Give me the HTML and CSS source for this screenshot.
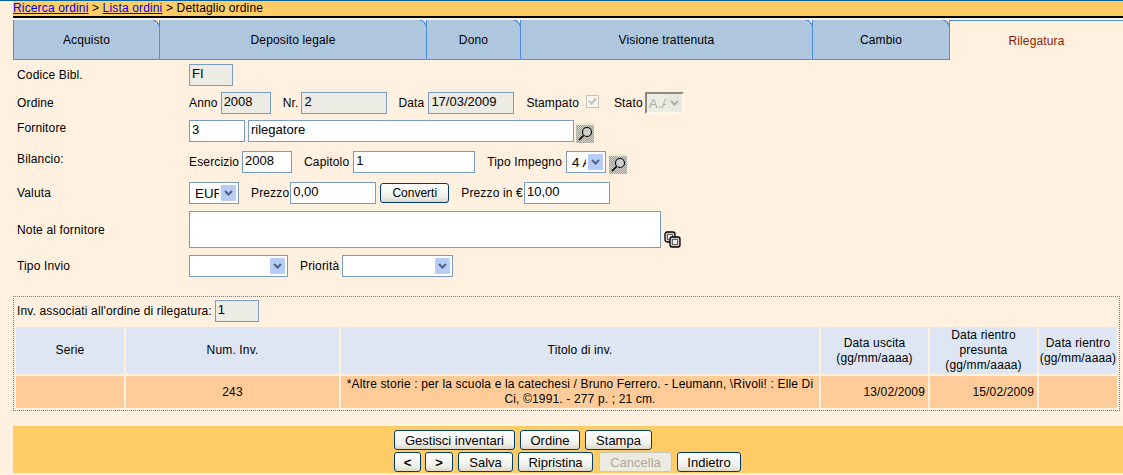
FILE: index.html
```html
<!DOCTYPE html>
<html lang="it">
<head>
    <meta charset="UTF-8">
    <title>Dettaglio ordine</title>
    <link rel="stylesheet" href="styles.css">
</head>
<body>
    <svg class="defs" width="0" height="0">
        <defs>
            <pattern id="dots" width="2" height="2" patternUnits="userSpaceOnUse">
                <rect width="2" height="2" fill="#d4d4cc"/>
                <rect width="1" height="1" fill="#9c9c9c"/>
                <rect x="1" y="1" width="1" height="1" fill="#9c9c9c"/>
            </pattern>
            <symbol id="lens" viewBox="0 0 18 20">
                <rect y="2" width="18" height="18" fill="url(#dots)"/>
                <rect width="18" height="2" fill="#ece8c8"/>
                <circle cx="11" cy="9" r="4.5" fill="#d0d0d0" stroke="#000" stroke-width="1.1"/>
                <path d="M7.5 12.5 L3 17" stroke="#000" stroke-width="1.7"/>
            </symbol>
        </defs>
    </svg>

    <div class="crumbs"><a href="#">Ricerca ordini</a> &gt; <a href="#">Lista ordini</a> &gt; Dettaglio ordine</div>

    <div class="tabs">
        <a class="tab t1">Acquisto</a>
        <a class="tab t2">Deposito legale</a>
        <a class="tab t3">Dono</a>
        <a class="tab t4">Visione trattenuta</a>
        <a class="tab t5">Cambio</a>
        <a class="tab active">Rilegatura</a>
    </div>

    <form class="detail">
        <div class="row r1">
            <label class="lbl">Codice Bibl.</label>
            <input class="off w44" value="FI" disabled>
        </div>
        <div class="row r2">
            <label class="lbl">Ordine</label>
            <span>Anno</span>
            <input class="off w50 ml3" value="2008" disabled>
            <span class="ml12">Nr.</span>
            <input class="off w86 ml3" value="2" disabled>
            <span class="ml11">Data</span>
            <input class="off w86 ml4" value="17/03/2009" disabled>
            <span class="ml12">Stampato</span>
            <input class="check" type="checkbox" checked disabled>
            <span class="ml15">Stato</span>
            <select class="sel-off" disabled><option>A.A.</option></select>
        </div>
        <div class="row r3">
            <label class="lbl">Fornitore</label>
            <input class="w56" value="3">
            <input class="w326 ml3" value="rilegatore">
            <svg class="lens-ico" width="18" height="20"><use href="#lens"/></svg>
        </div>
        <div class="row r4">
            <label class="lbl">Bilancio:</label>
            <span>Esercizio</span>
            <input class="w50 ml3" value="2008">
            <span class="ml12">Capitolo</span>
            <input class="w122 ml4" value="1">
            <span class="ml12">Tipo Impegno</span>
            <select class="w40 ml4"><option>4 A</option></select>
            <svg class="lens-ico" width="18" height="20"><use href="#lens"/></svg>
        </div>
        <div class="row r5">
            <label class="lbl">Valuta</label>
            <select class="w50"><option>EUR</option></select>
            <span class="ml12">Prezzo</span>
            <input class="w86 ml1" value="0,00">
            <button type="button" class="btn convert">Converti</button>
            <span class="ml12">Prezzo in €</span>
            <input class="w86 ml1" value="10,00">
        </div>
        <div class="row r6">
            <label class="lbl">Note al fornitore</label>
            <textarea class="note"></textarea>
            <svg class="copy-ico" width="17" height="17" viewBox="0 0 17 17">
                <rect x="1" y="1" width="10" height="10" rx="2" fill="#c8c8c8" stroke="#000" stroke-width="1.3"/>
                <rect x="3.5" y="3.5" width="5" height="5" fill="#eee" stroke="#666"/>
                <rect x="6" y="6" width="10" height="10" rx="2" fill="#c8c8c8" stroke="#000" stroke-width="1.3"/>
                <rect x="8.5" y="8.5" width="5" height="5" fill="#eee" stroke="#666"/>
            </svg>
        </div>
        <div class="row r7">
            <label class="lbl">Tipo Invio</label>
            <select class="w99"><option></option></select>
            <span class="ml12">Priorità</span>
            <select class="w111 ml3"><option></option></select>
        </div>

        <div class="inv">
            <div class="inv-head">
                <span>Inv. associati all'ordine di rilegatura:</span>
                <input class="off w44 ml3" value="1" disabled>
            </div>
            <table class="inv-table">
                <colgroup>
                    <col class="c1"><col class="c2"><col class="c3"><col class="c4"><col class="c5"><col class="c6">
                </colgroup>
                <tr class="h">
                    <th>Serie</th>
                    <th>Num. Inv.</th>
                    <th>Titolo di inv.</th>
                    <th>Data uscita<br>(gg/mm/aaaa)</th>
                    <th>Data rientro<br>presunta<br>(gg/mm/aaaa)</th>
                    <th>Data rientro<br>(gg/mm/aaaa)</th>
                </tr>
                <tr class="d">
                    <td></td>
                    <td>243</td>
                    <td>*Altre storie : per la scuola e la catechesi / Bruno Ferrero. - Leumann, \Rivoli! : Elle Di Ci, ©1991. - 277 p. ; 21 cm.</td>
                    <td class="dt">13/02/2009</td>
                    <td class="dt">15/02/2009</td>
                    <td></td>
                </tr>
            </table>
        </div>
    </form>

    <div class="actions">
        <div class="btn-row">
            <button type="button" class="btn b121">Gestisci inventari</button>
            <button type="button" class="btn b60">Ordine</button>
            <button type="button" class="btn b67">Stampa</button>
        </div>
        <div class="btn-row">
            <button type="button" class="btn nav-btn">&lt;</button>
            <button type="button" class="btn nav-btn next">&gt;</button>
            <button type="button" class="btn b55">Salva</button>
            <button type="button" class="btn b75">Ripristina</button>
            <button type="button" class="btn b73 ml1" disabled>Cancella</button>
            <button type="button" class="btn b64">Indietro</button>
        </div>
    </div>
</body>
</html>
```

FILE: styles.css
```css
html, body {
    margin: 0;
    padding: 0;
}
body {
    height: 475px;
    overflow: hidden;
    background: #fff0e0;
    font-family: "Liberation Sans", Arial, sans-serif;
    font-size: 12px;
    letter-spacing: .15px;
    color: #000;
    border-top: 1px solid #00609c;
    box-sizing: border-box;
}
.defs {
    display: block;
    height: 0;
}

/* briciole */
.crumbs {
    margin-left: 13px;
    height: 15px;
    line-height: 15px;
    background: #ffcc66;
    border-bottom: 2px solid #000;
}
.crumbs a {
    color: #0000ee;
}

/* linguette */
.tabs {
    display: flex;
    margin: 2px 0 0 13px;
    height: 40px;
}
.tab {
    position: relative;
    display: flex;
    align-items: center;
    justify-content: center;
    box-sizing: border-box;
    background: #aec6de;
    border-left: 1px solid #4c90e0;
    border-bottom: 1px solid #4c90e0;
}
.tab::after {
    content: "";
    position: absolute;
    top: 0;
    right: 0;
    width: 6px;
    height: 6px;
    background: radial-gradient(circle at 0 100%, #aec6de 0 5px, #4c90e0 5px 6px, #fff0e0 6.5px);
}
.t1 { width: 146px; }
.t2 { width: 267px; }
.t3 { width: 94px; }
.t4 { width: 292px; }
.t5 { width: 137px; }
.tab.active {
    flex: 1;
    background: #fff0e0;
    color: #8b1e00;
    border-bottom: none;
    border-top: 1px solid #4c90e0;
}
.tab.active::after {
    display: none;
}

/* form */
.detail {
    display: block;
    padding-top: 4px;
}
.row {
    display: flex;
    align-items: center;
    height: 22px;
    margin-bottom: 6px;
    padding-left: 189px;
    position: relative;
}
.r3 { margin-bottom: 9px; }
.r4 { margin-bottom: 9px; }
.r5 { margin-bottom: 7px; }
.r6 { height: 37px; margin-bottom: 7px; }
.r7 { margin-bottom: 19px; }
.lbl {
    position: absolute;
    left: 17px;
    top: 4px;
}
.r6 .lbl { top: 12px; }
.r3 .lbl { top: 1px; }
.r4 .lbl { top: 1px; }
input, select, textarea {
    box-sizing: border-box;
    height: 22px;
    margin: 0;
    padding: 0 2px;
    border: 1px solid #7a9cc4;
    border-radius: 0;
    background: #fff;
    font-family: "Liberation Sans", Arial, sans-serif;
    font-size: 13px;
    color: #000;
    outline: none;
}
input {
    padding-bottom: 3px;
}
input.off {
    background: #ecece4;
    color: #000;
    -webkit-text-fill-color: #000;
    opacity: 1;
}
select {
    appearance: none;
    -webkit-appearance: none;
    padding: 0 19px 0 5px;
    font-size: 13.33px;
    background-color: #fff;
    background-image: url("data:image/svg+xml,%3Csvg xmlns='http://www.w3.org/2000/svg' width='15' height='16'%3E%3Crect width='15' height='16' rx='1' fill='%23b8cdf6'/%3E%3Cpath d='M4 6l3.5 3.5L11 6' fill='none' stroke='%234d6185' stroke-width='2'/%3E%3C/svg%3E");
    background-repeat: no-repeat;
    background-position: right 2px center;
    opacity: 1;
}
.sel-off {
    width: 39px;
    margin-left: 2px;
    border: 2px solid;
    border-color: #8c8c7c #fbf8f0 #fbf8f0 #8c8c7c;
    background-color: #ecece4;
    background-image: url("data:image/svg+xml,%3Csvg xmlns='http://www.w3.org/2000/svg' width='15' height='16'%3E%3Crect width='15' height='16' fill='%23e8e8e0'/%3E%3Cpath d='M4 6l3.5 3.5L11 6' fill='none' stroke='%23b0b0a8' stroke-width='2'/%3E%3C/svg%3E");
    background-position: right 0 center;
    color: #b0b0a8;
    padding-left: 2px;
    padding-right: 16px;
}
.check {
    appearance: none;
    -webkit-appearance: none;
    width: 13px;
    height: 13px;
    margin: 0 0 3px 7px;
    padding: 0;
    border: 1px solid #c8c6bc;
    background: #f6f4ec url("data:image/svg+xml,%3Csvg xmlns='http://www.w3.org/2000/svg' width='11' height='11'%3E%3Cpath d='M2 5l2.5 2.5L9 2.5' fill='none' stroke='%23c4c2b8' stroke-width='2'/%3E%3C/svg%3E") center no-repeat;
}
.note {
    width: 472px;
    height: 37px;
    resize: none;
}
.w40 { width: 40px; }
.w44 { width: 44px; }
.w50 { width: 50px; }
.w56 { width: 56px; }
.w86 { width: 86px; }
.w99 { width: 99px; }
.w111 { width: 111px; }
.w122 { width: 122px; }
.w326 { width: 326px; }
.ml1 { margin-left: 1px; }
.ml3 { margin-left: 3px; }
.ml4 { margin-left: 4px; }
.ml11 { margin-left: 11px; }
.ml12 { margin-left: 12px; }
.ml15 { margin-left: 15px; }
.lens-ico {
    margin: 4px 0 0 2px;
    flex: none;
}
.w40 + .lens-ico {
    margin-left: 3px;
}
.copy-ico {
    margin: 19px 0 0 3px;
    flex: none;
}

/* inventari */
.inv {
    margin: 0 3px 0 13px;
    border: 1px dotted #3a8ae8;
    height: 115px;
    box-sizing: border-box;
    padding-top: 3px;
}
.inv-head {
    display: flex;
    align-items: center;
    height: 22px;
    padding-left: 3px;
}
.inv-table {
    table-layout: fixed;
    width: 1105px;
    margin: 3px 0 0 0;
    border-collapse: separate;
    border-spacing: 2px;
}
.c1 { width: 108px; }
.c2 { width: 213px; }
.c3 { width: 478px; }
.c4 { width: 107px; }
.c5 { width: 107px; }
.c6 { width: 78px; }
.inv-table th, .inv-table td {
    padding: 1px 0;
    font-weight: normal;
    text-align: center;
    line-height: 15px;
}
.h th {
    background: #dde6f2;
    height: 45px;
}
.d td {
    background: #ffcc99;
    height: 30px;
}
.inv-table .d td.dt {
    text-align: right;
    padding-right: 3px;
}

/* pulsanti */
.actions {
    margin: 15px 0 0 13px;
    height: 47px;
    box-sizing: border-box;
    padding: 4px 0 0 381px;
    background: #ffcc66;
}
.btn-row {
    display: flex;
    gap: 5px;
    height: 20px;
    margin-bottom: 2px;
}
.btn {
    box-sizing: border-box;
    height: 20px;
    padding: 0;
    border: 1px solid #003c74;
    border-radius: 3px;
    background: linear-gradient(#ffffff, #f0f0ea 70%, #dcd8c8);
    font-family: "Liberation Sans", Arial, sans-serif;
    font-size: 13px;
    color: #000;
}
.btn:disabled {
    border-color: #c9c7ba;
    background: #ecebe2;
    color: #aca899;
}
.b55 { width: 55px; }
.b60 { width: 60px; }
.b64 { width: 64px; }
.b67 { width: 67px; }
.b73 { width: 73px; }
.b75 { width: 75px; }
.b121 { width: 121px; }
.nav-btn {
    width: 27px;
    font-weight: bold;
}
.next {
    width: 28px;
    margin-left: -1px;
}
.convert {
    width: 69px;
    margin-left: 4px;
    font-size: 12px;
}
```
